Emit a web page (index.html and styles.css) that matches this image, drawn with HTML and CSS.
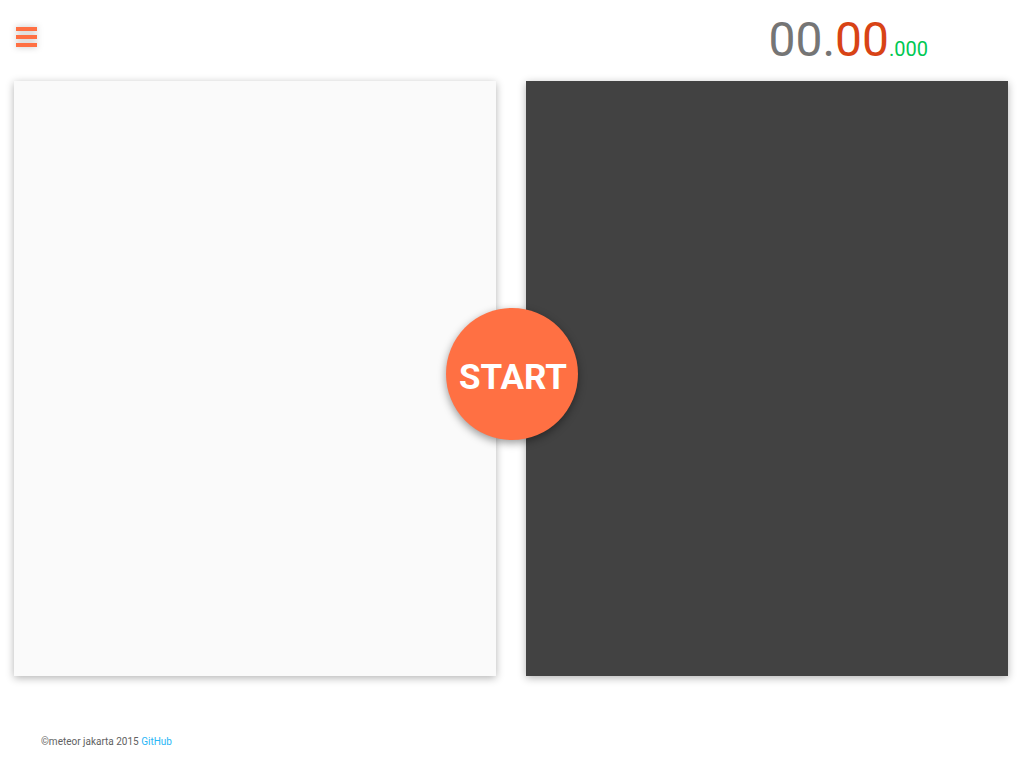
FILE: index.html
```html
<!DOCTYPE html>
<html>
<head>
<meta charset="utf-8">
<link rel="stylesheet" href="styles.css">
</head>
<body>
<header class="top">
  <div class="menu"><span></span><span></span><span></span></div>
  <div class="timer"><span class="sec">00.</span><span class="cs">00</span><span class="ms">.000</span></div>
</header>
<main class="board">
  <section class="panel light"></section>
  <section class="panel dark"></section>
  <button class="start">START</button>
</main>
<footer class="foot">©meteor jakarta 2015 <a href="#">GitHub</a></footer>
</body>
</html>
```
FILE: styles.css
```css
html, body { margin: 0; padding: 0; background: #fff; }
body { width: 1024px; height: 768px; font-family: Roboto, "Noto Sans", sans-serif; overflow: hidden; }
.top { height: 81px; display: flex; justify-content: space-between; align-items: flex-start; position: relative; }
.menu { margin: 27px 0 0 16px; display: flex; flex-direction: column; gap: 4px; filter: drop-shadow(0 0 3px rgba(0,0,0,0.25)); }
.menu span { display: block; width: 21px; height: 4px; background: #ff7043; }
.timer { margin: 16px 96px 0 0; line-height: 1; white-space: nowrap; }
.sec { font-size: 48px; color: #757575; }
.cs { font-size: 48px; color: #d84315; }
.ms { font-size: 20px; color: #00c853; }
.board { display: flex; gap: 30px; padding: 0 16px 0 14px; position: relative; }
.panel { width: 482px; height: 595px; box-shadow: 0 2px 8px rgba(0,0,0,0.3); }
.light { background: #fafafa; }
.dark { background: #424242; }
.start { position: absolute; left: 446px; top: 227px; width: 132px; height: 132px; border-radius: 50%; border: none; background: #ff7043; color: #fff; font-family: Roboto, sans-serif; font-weight: 700; font-size: 35px; padding: 6px 0 0 2px; box-shadow: 0 3px 8px rgba(0,0,0,0.4); }
.foot { margin: 60px 0 0 41px; font-size: 10px; color: #616161; }
.foot a { color: #29b6f6; text-decoration: none; }
```
